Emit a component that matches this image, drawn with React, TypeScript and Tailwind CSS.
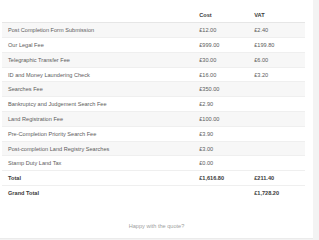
const items = [
  { label: 'Post Completion Form Submission', cost: '£12.00', vat: '£2.40' },
  { label: 'Our Legal Fee', cost: '£999.00', vat: '£199.80' },
  { label: 'Telegraphic Transfer Fee', cost: '£30.00', vat: '£6.00' },
  { label: 'ID and Money Laundering Check', cost: '£16.00', vat: '£3.20' },
  { label: 'Searches Fee', cost: '£350.00', vat: '' },
  { label: 'Bankruptcy and Judgement Search Fee', cost: '£2.90', vat: '' },
  { label: 'Land Registration Fee', cost: '£100.00', vat: '' },
  { label: 'Pre-Completion Priority Search Fee', cost: '£3.90', vat: '' },
  { label: 'Post-completion Land Registry Searches', cost: '£3.00', vat: '' },
  { label: 'Stamp Duty Land Tax', cost: '£0.00', vat: '' },
];

export default function App() {
  return (
    <div className="w-[319px] h-[240px] bg-[#f3f3f3] overflow-hidden font-['Liberation_Sans',Arial,sans-serif] text-[5.6px] leading-[8px] text-[#5c5c5c]">
      <div className="w-[313px] h-[239px] bg-white border-b border-[#ebebeb] pt-[8px] pl-[2px] pr-[8px] flex flex-col">
        <table className="w-full table-fixed border-collapse">
          <colgroup>
            <col />
            <col className="w-[55px]" />
            <col className="w-[54px]" />
          </colgroup>
          <thead>
            {/* header row */}
            <tr className="h-[14.8px] border-b border-[#e6e6e6] text-[#3a3a3a]">
              <th className="px-[3.2px] text-left font-bold"></th>
              <th className="px-[3.2px] text-left font-bold">Cost</th>
              <th className="px-[3.2px] text-left font-bold">VAT</th>
            </tr>
          </thead>
          <tbody>
            {items.map((item, i) => (
              <tr
                key={i}
                className={`h-[14.8px] border-t border-[#efefef] ${i % 2 === 0 ? 'bg-[#f7f7f7]' : 'bg-white'}`}
              >
                <td className="pl-[6px] pr-[3.2px]">{item.label}</td>
                <td className="px-[3.2px]">{item.cost}</td>
                <td className="px-[3.2px]">{item.vat}</td>
              </tr>
            ))}
          </tbody>
          <tfoot className="text-[#3a3a3a]">
            <tr className="h-[14.8px] border-t border-[#efefef] font-bold">
              <td className="pl-[6px] pr-[3.2px]">Total</td>
              <td className="px-[3.2px]">£1,616.80</td>
              <td className="px-[3.2px]">£211.40</td>
            </tr>
            <tr className="h-[14.8px] border-t border-[#efefef] font-bold">
              <td className="pl-[6px] pr-[3.2px]">Grand Total</td>
              <td className="px-[3.2px]"></td>
              <td className="px-[3.2px]">£1,728.20</td>
            </tr>
          </tfoot>
        </table>
        <p className="mt-[22px] pl-[6px] text-center text-[#a0a0a0]">Happy with the quote?</p>
      </div>
    </div>
  );
}
